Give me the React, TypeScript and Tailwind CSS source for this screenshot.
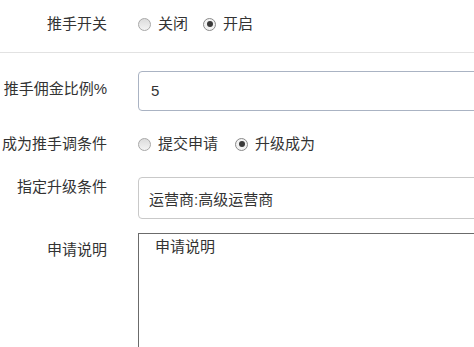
const FONT = 'font-["Liberation_Sans","Noto_Sans_CJK_SC",sans-serif]';

function Radio({ label, checked }: { label: string; checked?: boolean }) {
  return (
    <label className="flex items-center">
      <span
        className={
          checked
            ? 'w-[13px] h-[13px] rounded-full border border-[#8a8a8a] bg-[#f2f2f2] flex items-center justify-center'
            : 'w-[13px] h-[13px] rounded-full border border-[#a8a8a8] bg-gradient-to-b from-[#dcdcdc] to-[#f4f4f4]'
        }
      >
        {checked && <span className="w-[6px] h-[6px] rounded-full bg-[#3a3a3a]" />}
      </span>
      <span className="ml-[7px]">{label}</span>
    </label>
  );
}

function Label({ children, className = '' }: { children: React.ReactNode; className?: string }) {
  return <div className={`w-[107px] shrink-0 text-right ${className}`}>{children}</div>;
}

export default function App() {
  return (
    <div className={`w-[474px] h-[347px] overflow-hidden bg-white text-[#333] text-[15px] leading-[18px] ${FONT}`}>
      {/* 开关 */}
      <div className="flex pt-[15px] pb-[19px] border-b border-[#e2e2e2]">
        <Label>推手开关</Label>
        <div className="ml-[31px] flex gap-[15px]">
          <Radio label="关闭" />
          <Radio label="开启" checked />
        </div>
      </div>

      {/* 佣金比例 */}
      <div className="flex mt-[18px]">
        <Label className="mt-[9px]">推手佣金比例%</Label>
        <div className="ml-[31px] w-[420px] shrink-0 h-[40px] border border-[#aab3c3] rounded-[4px] flex items-center pl-[12px]">
          5
        </div>
      </div>

      {/* 条件 */}
      <div className="flex mt-[24px]">
        <Label>成为推手调条件</Label>
        <div className="ml-[31px] flex gap-[17px]">
          <Radio label="提交申请" />
          <Radio label="升级成为" checked />
        </div>
      </div>

      {/* 指定升级条件 */}
      <div className="flex mt-[24px]">
        <Label className="mt-[1px]">指定升级条件</Label>
        <div className="ml-[31px] w-[420px] shrink-0 h-[42px] border border-[#c9c9c9] rounded-[4px] flex items-center pl-[10px] pt-[3px]">
          运营商:高级运营商
        </div>
      </div>

      {/* 申请说明 */}
      <div className="flex mt-[14px]">
        <Label className="mt-[8px]">申请说明</Label>
        <div className="ml-[31px] w-[420px] shrink-0 h-[140px] border border-[#6b6b6b] pl-[16px] pt-[4px]">
          申请说明
        </div>
      </div>
    </div>
  );
}
